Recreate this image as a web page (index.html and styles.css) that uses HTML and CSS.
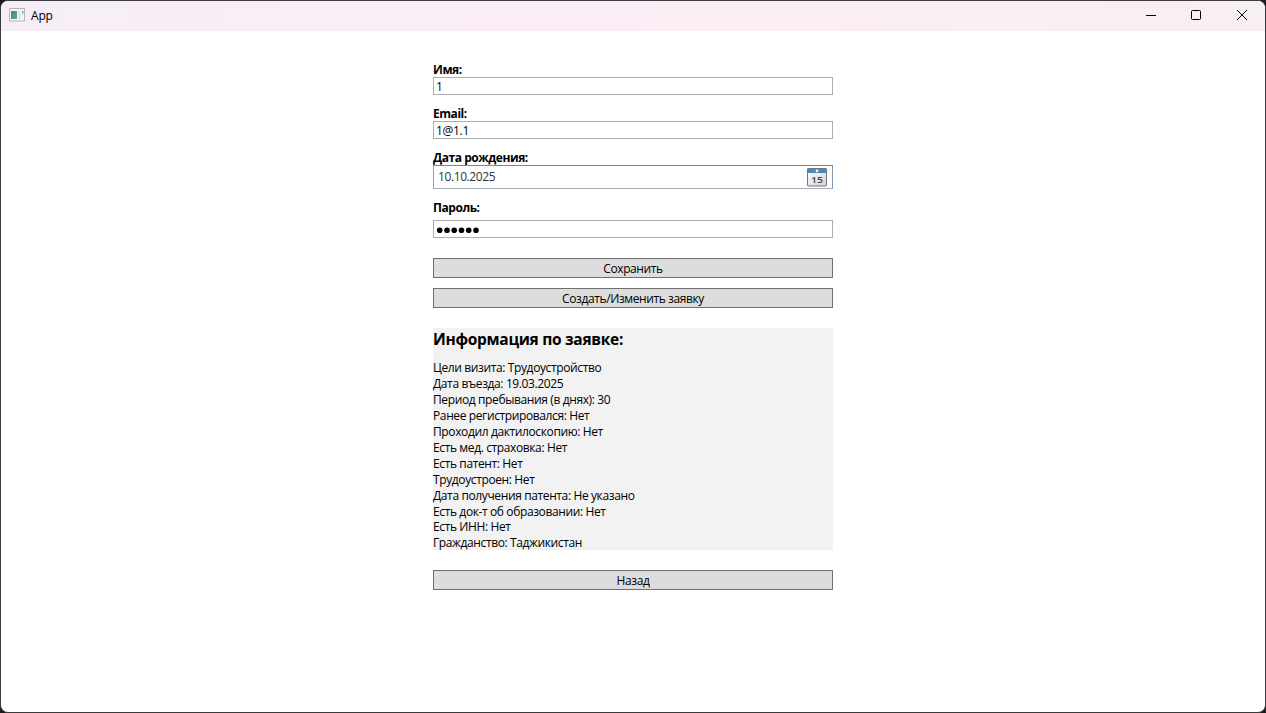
FILE: index.html
```html
<!DOCTYPE html>
<html lang="ru">
<head>
<meta charset="utf-8">
<title>App</title>
<link rel="stylesheet" href="styles.css">
</head>
<body>
<div class="window">
  <header class="titlebar">
    <svg class="app-icon" width="16" height="14" viewBox="0 0 16 14">
      <defs>
        <linearGradient id="pane" x1="0" y1="0" x2="1" y2="1"><stop offset="0" stop-color="#4c7fa0"/><stop offset="1" stop-color="#58ad78"/></linearGradient>
        <linearGradient id="strip" x1="0" y1="0" x2="0" y2="1"><stop offset="0" stop-color="#5b9bb8"/><stop offset="1" stop-color="#e2ece8"/></linearGradient>
      </defs>
      <rect x=".5" y=".5" width="15" height="12.5" fill="#f3f4f4" stroke="#b4b6b9"/>
      <rect x="2" y="3" width="6" height="8" fill="url(#pane)"/>
      <rect x="9" y="3" width="3" height="8" fill="#e2e6e7"/>
      <rect x="13" y="3" width="1.5" height="4" fill="url(#strip)"/>
    </svg>
    <span class="title">App</span>
    <div class="controls">
      <svg width="46" height="29" viewBox="0 0 46 29"><path d="M18 14.5h10" stroke="#000"/></svg>
      <svg width="45" height="29" viewBox="0 0 45 29"><rect x="17.5" y="9.5" width="9" height="9" rx="1" fill="none" stroke="#000"/></svg>
      <svg width="46" height="29" viewBox="0 0 46 29"><path d="M18 9l10 10M28 9l-10 10" stroke="#000" stroke-width="1"/></svg>
    </div>
  </header>
  <main class="form">
    <label class="label">Имя:</label>
    <div class="input">1</div>
    <label class="label">Email:</label>
    <div class="input">1@1.1</div>
    <label class="label">Дата рождения:</label>
    <div class="date"><span>10.10.2025</span>
      <svg class="calendar" width="20" height="19" viewBox="0 0 20 19">
        <defs><linearGradient id="page" x1="0" y1="0" x2="1" y2="1"><stop offset="0" stop-color="#fff"/><stop offset="1" stop-color="#d2d2d2"/></linearGradient></defs>
        <rect x=".5" y=".5" width="19" height="17.5" rx=".5" fill="url(#page)" stroke="#777"/>
        <rect x="1" y="1" width="18" height="4" fill="#4889bd"/>
        <circle cx="10" cy="2.8" r="1.4" fill="#fff"/>
        <text class="day" x="10" y="15.2" text-anchor="middle" textLength="12" lengthAdjust="spacingAndGlyphs">15</text>
      </svg>
    </div>
    <label class="label">Пароль:</label>
    <div class="input password"><svg width="46" height="16" viewBox="0 0 46 16"><g fill="#000"><circle cx="5.7" cy="9.3" r="2.8"/><circle cx="13" cy="9.3" r="2.8"/><circle cx="20.2" cy="9.3" r="2.8"/><circle cx="27.5" cy="9.3" r="2.8"/><circle cx="34.7" cy="9.3" r="2.8"/><circle cx="42" cy="9.3" r="2.8"/></g></svg></div>
    <button class="button">Сохранить</button>
    <button class="button request">Создать/Изменить заявку</button>
    <section class="info">
      <h1 class="heading">Информация по заявке:</h1>
      <p class="line">Цели визита: Трудоустройство</p>
      <p class="line">Дата въезда: 19.03.2025</p>
      <p class="line">Период пребывания (в днях): 30</p>
      <p class="line">Ранее регистрировался: Нет</p>
      <p class="line">Проходил дактилоскопию: Нет</p>
      <p class="line">Есть мед. страховка: Нет</p>
      <p class="line">Есть патент: Нет</p>
      <p class="line">Трудоустроен: Нет</p>
      <p class="line">Дата получения патента: Не указано</p>
      <p class="line">Есть док-т об образовании: Нет</p>
      <p class="line tight">Есть ИНН: Нет</p>
      <p class="line">Гражданство: Таджикистан</p>
    </section>
    <button class="button">Назад</button>
  </main>
</div>
</body>
</html>
```
FILE: styles.css
```css
* { box-sizing: border-box; }
body { margin: 0; background: #1c1c1e; font: 12px/16px "Open Sans", "Noto Sans", sans-serif; color: #000; overflow: hidden; }
.window { height: 713px; border: 1px solid #3b3a3e; border-radius: 8px; background: #fff; overflow: hidden; }
.titlebar { height: 30px; display: flex; align-items: center; padding-left: 8px; background: linear-gradient(90deg, #f7edf8, #fbedf5 50%, #f8eff0); }
.app-icon { margin-bottom: 2px; }
.title { margin-left: 6px; letter-spacing: -.2px; }
.controls { display: flex; margin: 0 0 1px auto; }
.form { width: 400px; margin: 31px auto 0; display: flex; flex-direction: column; }
.label { height: 15px; font-weight: 700; letter-spacing: -.45px; }
.input { height: 18px; margin-bottom: 11px; padding: 1px 0 0 2px; border: 1px solid #abadb3; letter-spacing: -.3px; }
.date { height: 24px; margin-bottom: 11px; padding: 0 5px 0 4px; display: flex; align-items: center; justify-content: space-between; border: 1px solid; border-color: #688caf #8398aa #a3aeb9 #8ea5b8; color: #333; letter-spacing: -.4px; }
.day { font: 600 9.5px "Open Sans", sans-serif; fill: #444; letter-spacing: 0; }
.password { margin: 5px 0 20px; padding: 0; }
.password svg { display: block; }
.button { height: 20px; padding: 1px 0 0; border: 1px solid #707070; background: #ddd; font: inherit; line-height: 18px; color: #000; letter-spacing: -.4px; }
.request { margin-top: 10px; }
.info { height: 222px; margin: 20px 0; background: #f2f2f2; }
.heading { margin: 0 0 10px; font-size: 15.5px; line-height: 22px; letter-spacing: -.3px; }
.line { margin: 0; line-height: 16px; letter-spacing: -.38px; white-space: nowrap; }
.tight { margin-top: -1px; }
```
